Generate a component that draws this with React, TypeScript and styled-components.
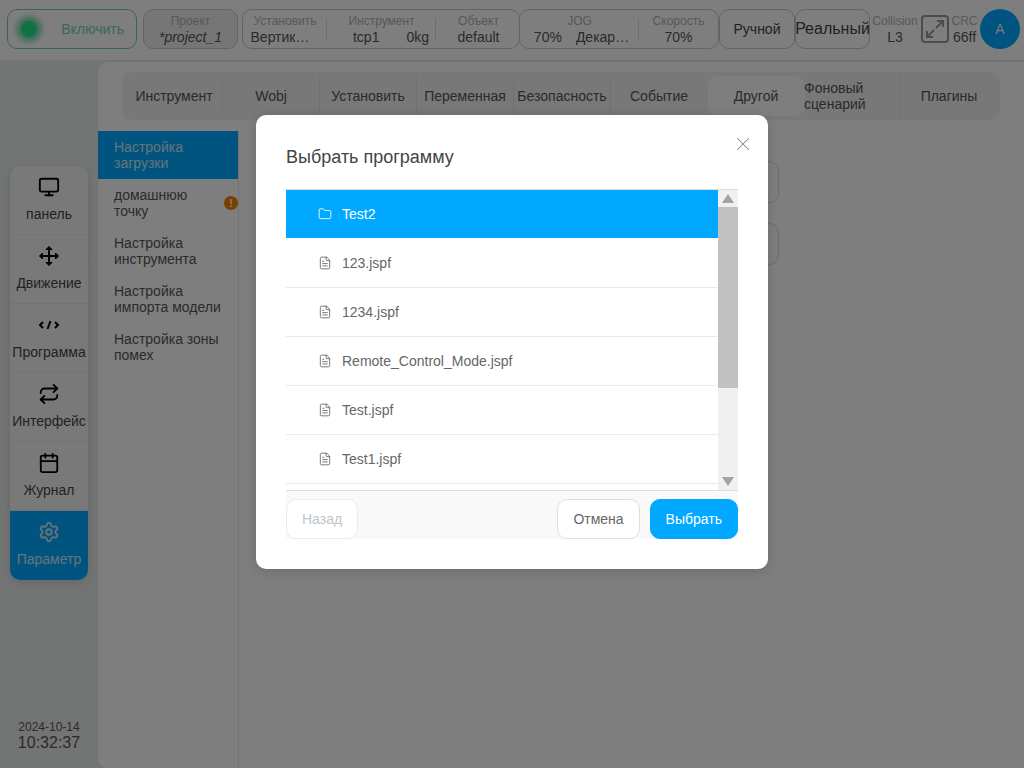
import React from 'react'
import styled, { createGlobalStyle } from 'styled-components'
import { Monitor, Repeat, Calendar, Settings, Folder, FileText, X } from 'lucide-react'

const GlobalStyle = createGlobalStyle`
    html, body {
        margin: 0;
        padding: 0;
        width: 1024px;
        height: 768px;
        overflow: hidden;
        font-family: "Liberation Sans", Arial, sans-serif;
        color: #333;
    }
    * {
        box-sizing: border-box;
    }
`

const MoveIcon = () => (
    <svg width="22" height="22" viewBox="0 0 22 22" fill="#000" stroke="#000" strokeWidth="2">
        <path d="M11 3v16M3 11h16" fill="none" />
        <path d="M11 1.5l3 3h-6zM11 20.5l3-3h-6zM1.5 11l3-3v6zM20.5 11l-3-3v6z" strokeWidth="1" strokeLinejoin="round" />
    </svg>
)

const CodeIcon = () => (
    <svg width="22" height="22" viewBox="0 0 22 22" fill="none" stroke="#000" strokeWidth="2">
        <path d="M5 8l-3 3 3 3M17 8l3 3-3 3M12.5 7l-3 8" />
    </svg>
)

const navItems = [
    { label: 'панель', icon: <Monitor size={24} strokeWidth={2} /> },
    { label: 'Движение', icon: <MoveIcon /> },
    { label: 'Программа', icon: <CodeIcon /> },
    { label: 'Интерфейс', icon: <Repeat size={22} strokeWidth={2} /> },
    { label: 'Журнал', icon: <Calendar size={22} strokeWidth={2} /> },
    { label: 'Параметр', icon: <Settings size={22} strokeWidth={2} />, active: true },
]

const tabs = ['Инструмент', 'Wobj', 'Установить', 'Переменная', 'Безопасность', 'Событие', 'Другой', 'Фоновый сценарий', 'Плагины']

const files = ['123.jspf', '1234.jspf', 'Remote_Control_Mode.jspf', 'Test.jspf', 'Test1.jspf']

const App: React.FC = () => {
    return (
        <Page>
            <GlobalStyle />
            <Header>
                <PowerButton>
                    <Lamp />
                    <span>Включить</span>
                </PowerButton>
                <Pill $width={95} $shaded>
                    <Cell>
                        <small>Проект</small>
                        <em>*project_1</em>
                    </Cell>
                </Pill>
                <Pill $width={278}>
                    <Cell $width={84} $divided $right={10}>
                        <small>Установить</small>
                        <span>Вертик…</span>
                    </Cell>
                    <Cell $width={109} $divided $left={19}>
                        <small>Инструмент</small>
                        <TwoValues $gap={27}><span>tcp1</span><span>0kg</span></TwoValues>
                    </Cell>
                    <Cell $width={85}>
                        <small>Объект</small>
                        <span>default</span>
                    </Cell>
                </Pill>
                <Pill $width={200} $overlap>
                    <Cell $width={119} $divided $left={4}>
                        <small>JOG</small>
                        <TwoValues $gap={14}><span>70%</span><span>Декар…</span></TwoValues>
                    </Cell>
                    <Cell>
                        <small>Скорость</small>
                        <span>70%</span>
                    </Cell>
                </Pill>
                <ModeButton $width={76}>Ручной</ModeButton>
                <ModeButton $width={75} $large>Реальный</ModeButton>
                <Stat $width={50}>
                    <small>Collision</small>
                    <span>L3</span>
                </Stat>
                <ExpandIcon width="28" height="28" viewBox="0 0 28 28" fill="none" stroke="#999" strokeWidth="2">
                    <rect x="1" y="1" width="26" height="26" rx="3" />
                    <path d="M16 6h6v6M22 6l-7 7M12 22H6v-6M6 22l7-7" />
                </ExpandIcon>
                <Stat $width={29}>
                    <small>CRC</small>
                    <span>66ff</span>
                </Stat>
                <Avatar>A</Avatar>
            </Header>
            <Body>
                <LeftColumn>
                    <Nav>
                        {navItems.map(item => (
                            <NavItem key={item.label} $active={item.active}>
                                {item.icon}
                                <span>{item.label}</span>
                            </NavItem>
                        ))}
                    </Nav>
                    <Clock>
                        <small>2024-10-14</small>
                        <span>10:32:37</span>
                    </Clock>
                </LeftColumn>
                <Main>
                    <TabBar>
                        {tabs.map(tab => (
                            <Tab
                                key={tab}
                                $active={tab === 'Другой'}
                                $wrap={tab === 'Фоновый сценарий'}
                                $plain={tab === 'Другой' || tab === 'Событие' || tab === 'Плагины'}
                            >
                                <span>{tab}</span>
                            </Tab>
                        ))}
                    </TabBar>
                    <Content>
                        <SubMenu>
                            <SubItem $active>Настройка загрузки</SubItem>
                            <SubItem>
                                <span>домашнюю точку</span>
                                <Warn>!</Warn>
                            </SubItem>
                            <SubItem>Настройка инструмента</SubItem>
                            <SubItem>Настройка импорта модели</SubItem>
                            <SubItem>Настройка зоны помех</SubItem>
                        </SubMenu>
                        <Form>
                            <Field />
                            <Field />
                        </Form>
                    </Content>
                </Main>
            </Body>
            <Overlay>
                <Modal>
                    <CloseButton><X size={22} strokeWidth={1.1} /></CloseButton>
                    <Title>Выбрать программу</Title>
                    <ListBox>
                        <List>
                            <Row $selected>
                                <Folder size={14} />
                                <span>Test2</span>
                            </Row>
                            {files.map(file => (
                                <Row key={file}>
                                    <FileText size={14} />
                                    <span>{file}</span>
                                </Row>
                            ))}
                        </List>
                        <ScrollBar>
                            <ArrowBox><ArrowUp /></ArrowBox>
                            <Thumb />
                            <Track />
                            <ArrowBox><ArrowDown /></ArrowBox>
                        </ScrollBar>
                    </ListBox>
                    <Footer>
                        <Button $disabled>Назад</Button>
                        <FooterRight>
                            <Button>Отмена</Button>
                            <Button $primary>Выбрать</Button>
                        </FooterRight>
                    </Footer>
                </Modal>
            </Overlay>
        </Page>
    )
}

export default App

const Page = styled.div`
    position: relative;
    width: 1024px;
    height: 768px;
    overflow: hidden;
    background: linear-gradient(180deg, #e3ebe9 0%, #e6e8e8 100%);
`

const Header = styled.header`
    display: flex;
    align-items: center;
    height: 62px;
    padding: 0 3px 2px 7px;
    background: #fdfdfd;
    border-bottom: 2px solid #e6e6e6;
`

const PowerButton = styled.div`
    display: flex;
    align-items: center;
    width: 130px;
    height: 40px;
    margin-right: 6px;
    padding: 0 12px 0 13px;
    border: 1px solid #60d0a0;
    border-radius: 10px;
    background: #fdfdfd;
    color: #70d0a4;
    font-size: 14px;

    span {
        margin-left: auto;
    }
`

const Lamp = styled.div`
    width: 16px;
    height: 16px;
    border-radius: 50%;
    background: #26e08c;
    box-shadow: 0 0 5px 5px rgba(38, 200, 130, .6);
`

const Pill = styled.div<{ $width: number; $shaded?: boolean; $overlap?: boolean }>`
    display: flex;
    flex-shrink: 0;
    width: ${({ $width }) => $width}px;
    height: 40px;
    margin-right: ${({ $width }) => ($width === 95 ? 4 : 0)}px;
    margin-left: ${({ $overlap }) => ($overlap ? -1 : 0)}px;
    border: 1px solid #c8c8c8;
    border-radius: 10px;
    background: ${({ $shaded }) => ($shaded ? '#ececec' : '#fdfdfd')};
`

const Cell = styled.div<{ $width?: number; $divided?: boolean; $left?: number; $right?: number }>`
    position: relative;
    display: flex;
    flex-direction: column;
    align-items: center;
    justify-content: center;
    flex: ${({ $width }) => ($width ? `0 0 ${$width}px` : 1)};
    min-width: 0;
    line-height: 16px;
    font-size: 14px;
    white-space: nowrap;
    color: #555;

    small {
        font-size: 12px;
        line-height: 15px;
        color: #b0b0b0;
    }

    > span, > div {
        margin-left: ${({ $left }) => $left ?? 0}px;
        margin-right: ${({ $right }) => $right ?? 0}px;
    }

    em {
        font-style: italic;
        color: #555;
    }

    ${({ $divided }) => $divided && `
        &::after {
            content: '';
            position: absolute;
            right: 0;
            top: 8px;
            bottom: 8px;
            width: 1px;
            background: #ddd;
        }
    `}
`

const TwoValues = styled.div<{ $gap: number }>`
    display: flex;
    gap: ${({ $gap }) => $gap}px;
`

const ModeButton = styled.div<{ $width: number; $large?: boolean }>`
    display: flex;
    align-items: center;
    justify-content: center;
    flex-shrink: 0;
    width: ${({ $width }) => $width}px;
    height: 40px;
    border: 1px solid #c8c8c8;
    border-radius: 10px;
    font-size: ${({ $large }) => ($large ? 16 : 14)}px;
    color: #444;
    white-space: nowrap;
`

const Stat = styled.div<{ $width: number }>`
    display: flex;
    flex-direction: column;
    align-items: center;
    flex-shrink: 0;
    width: ${({ $width }) => $width}px;
    font-size: 14px;
    line-height: 16px;
    color: #555;

    small {
        font-size: 12px;
        line-height: 15px;
        color: #b0b0b0;
    }
`

const ExpandIcon = styled.svg`
    flex-shrink: 0;
    margin: 0 1px;
`

const Avatar = styled.div`
    display: flex;
    align-items: center;
    justify-content: center;
    flex-shrink: 0;
    width: 40px;
    height: 40px;
    margin-left: 1px;
    border-radius: 50%;
    background: #00a8ff;
    color: #e8f2f8;
    font-size: 14px;
`

const Body = styled.div`
    display: flex;
    height: 706px;
`

const LeftColumn = styled.aside`
    display: flex;
    flex-direction: column;
    align-items: center;
    width: 98px;
    padding: 104px 0 17px;
`

const Nav = styled.nav`
    width: 78px;
    overflow: hidden;
    border-radius: 10px;
    background: #f3f3f3;
    box-shadow: 0 2px 8px rgba(0, 0, 0, .12);
`

const NavItem = styled.div<{ $active?: boolean }>`
    display: flex;
    flex-direction: column;
    align-items: center;
    justify-content: flex-end;
    height: 69px;
    padding-bottom: 12px;
    gap: 8px;
    border-bottom: 1px solid ${({ $active }) => ($active ? 'transparent' : '#e6e6e6')};
    background: ${({ $active }) => ($active ? '#00a8ff' : 'transparent')};
    color: ${({ $active }) => ($active ? '#cfe6f5' : '#444')};
    font-size: 14px;
    line-height: 16px;
    white-space: nowrap;

    svg {
        flex-shrink: 0;
        height: 22px;
        color: ${({ $active }) => ($active ? '#cfe6f5' : '#000')};
    }
`

const Clock = styled.div`
    display: flex;
    flex-direction: column;
    align-items: center;
    margin-top: auto;
    color: #555;
    font-size: 16px;
    line-height: 17px;

    small {
        font-size: 12px;
        line-height: 14px;
    }
`

const Main = styled.main`
    flex: 1;
    display: flex;
    flex-direction: column;
    border-radius: 10px 0 0 10px;
    background: #fdfdfd;
`

const TabBar = styled.div`
    display: flex;
    align-items: center;
    flex-shrink: 0;
    width: 878px;
    height: 48px;
    margin: 10px 0 11px 24px;
    padding: 4px 0 4px 4px;
    border-radius: 10px;
    background: #f0f0f0;
`

const Tab = styled.div<{ $active?: boolean; $wrap?: boolean; $plain?: boolean }>`
    display: flex;
    align-items: center;
    justify-content: ${({ $wrap }) => ($wrap ? 'flex-start' : 'center')};
    width: 97px;
    height: 40px;
    margin-left: ${({ $wrap }) => ($wrap ? '-1px' : '0')};
    border-right: 1px solid ${({ $plain }) => ($plain ? 'transparent' : '#e2e2e2')};
    border-radius: ${({ $active }) => ($active ? '10px' : '0')};
    background: ${({ $active }) => ($active ? '#fdfdfd' : 'transparent')};
    font-size: 14px;
    line-height: 16px;
    color: #555;
    white-space: ${({ $wrap }) => ($wrap ? 'normal' : 'nowrap')};
`

const Content = styled.div`
    flex: 1;
    display: flex;
`

const SubMenu = styled.div`
    width: 141px;
    border-right: 1px solid #e6e6e6;
`

const SubItem = styled.div<{ $active?: boolean }>`
    display: flex;
    align-items: center;
    justify-content: space-between;
    height: 48px;
    padding: 0 0 0 16px;
    background: ${({ $active }) => ($active ? '#00a8ff' : 'transparent')};
    color: ${({ $active }) => ($active ? '#cfe6f5' : '#555')};
    font-size: 14px;
    line-height: 16px;

    span {
        width: 90px;
    }
`

const Warn = styled.div`
    display: flex;
    align-items: center;
    justify-content: center;
    width: 14px;
    height: 14px;
    border-radius: 50%;
    background: #f08000;
    color: #fff;
    font-size: 11px;
    font-weight: 700;
`

const Form = styled.div`
    display: flex;
    flex-direction: column;
    gap: 20px;
    padding: 30px 0 0 240px;
`

const Field = styled.div`
    width: 300px;
    height: 42px;
    border: 1px solid #dcdcdc;
    border-radius: 10px;
`

const Overlay = styled.div`
    position: absolute;
    inset: 0;
    display: flex;
    justify-content: center;
    align-items: flex-start;
    padding-top: 115px;
    background: rgba(0, 0, 0, .5);
`

const Modal = styled.div`
    position: relative;
    width: 512px;
    height: 454px;
    padding: 0 30px;
    border-radius: 10px;
    background: #fff;
    box-shadow: 0 2px 12px rgba(0, 0, 0, .15);
`

const CloseButton = styled.div`
    position: absolute;
    top: 18px;
    right: 14px;
    display: flex;
    color: #888;
`

const Title = styled.div`
    height: 74px;
    padding-top: 31px;
    font-size: 18px;
    line-height: 22px;
    color: #444;
`

const ListBox = styled.div`
    display: flex;
    height: 302px;
    border-top: 1px solid #ddd;
    border-bottom: 1px solid #ddd;
`

const List = styled.div`
    flex: 1;
    overflow: hidden;
`

const Row = styled.div<{ $selected?: boolean }>`
    display: flex;
    align-items: center;
    gap: 10px;
    height: 49px;
    padding-left: 32px;
    border-bottom: 1px solid ${({ $selected }) => ($selected ? '#fff' : '#ebebeb')};
    background: ${({ $selected }) => ($selected ? '#00a8ff' : '#fff')};
    color: ${({ $selected }) => ($selected ? '#fff' : '#666')};
    font-size: 14px;

    svg {
        flex-shrink: 0;
        stroke-width: 1.5;
        color: ${({ $selected }) => ($selected ? '#fff' : '#666')};
    }
`

const ScrollBar = styled.div`
    display: flex;
    flex-direction: column;
    flex-shrink: 0;
    width: 20px;
    background: #f0f0f0;
`

const ArrowBox = styled.div`
    display: flex;
    align-items: center;
    justify-content: center;
    flex-shrink: 0;
    height: 17px;
`

const ArrowUp = styled.div`
    width: 0;
    height: 0;
    border-left: 6.5px solid transparent;
    border-right: 6.5px solid transparent;
    border-bottom: 9px solid #a3a3a3;
`

const ArrowDown = styled(ArrowUp)`
    border-bottom: 0;
    border-top: 9px solid #a3a3a3;
`

const Thumb = styled.div`
    height: 181px;
    flex-shrink: 0;
    background: #c1c1c1;
`

const Track = styled.div`
    flex: 1;
`

const Footer = styled.div`
    display: flex;
    justify-content: space-between;
    height: 48px;
    padding-top: 8px;
    background: #f9f9f9;
`

const FooterRight = styled.div`
    display: flex;
    gap: 10px;
`

const Button = styled.div<{ $primary?: boolean; $disabled?: boolean }>`
    display: flex;
    align-items: center;
    justify-content: center;
    height: 40px;
    padding: 0 15px;
    border: 1px solid ${({ $primary, $disabled }) => ($primary ? '#00a8ff' : $disabled ? '#ececec' : '#dcdfe6')};
    border-radius: 10px;
    background: ${({ $primary }) => ($primary ? '#00a8ff' : '#fff')};
    color: ${({ $primary, $disabled }) => ($primary ? '#fff' : $disabled ? '#c0c4cc' : '#666')};
    font-size: 14px;
`
